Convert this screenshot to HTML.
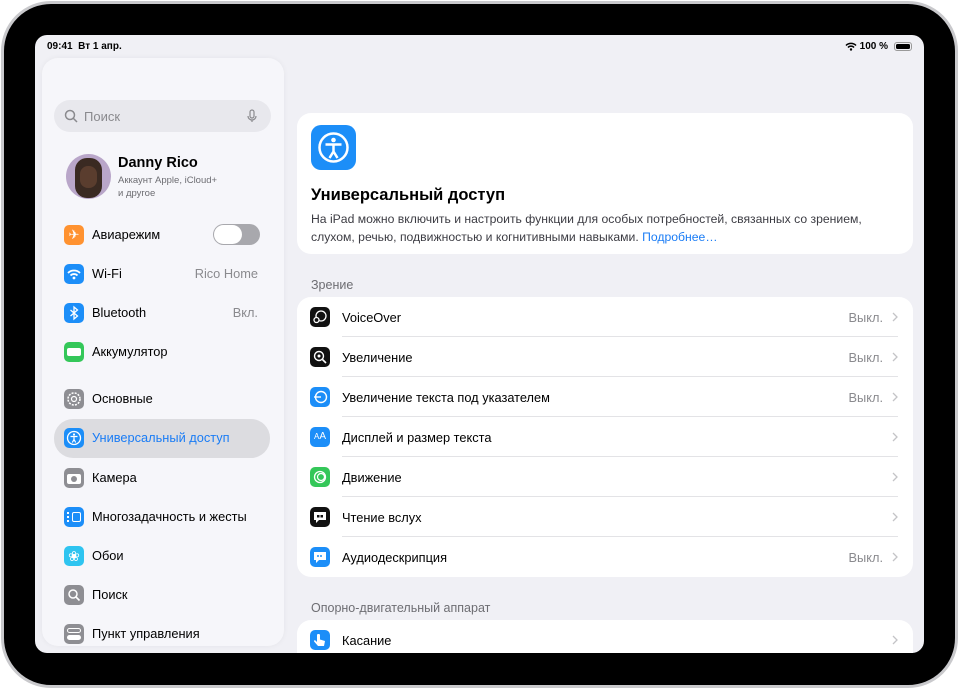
<!DOCTYPE html>
<html><head><meta charset="utf-8"><style>
*{margin:0;padding:0;box-sizing:border-box}
body{width:960px;height:692px;background:#fff;font-family:"Liberation Sans",sans-serif;position:relative;overflow:hidden}
.frame{position:absolute;left:1px;top:1px;width:957px;height:687px;border-radius:50px;background:#000;border:3px solid #c9c9cc}
.screen{position:absolute;left:35px;top:35px;width:889px;height:618px;border-radius:12px;background:#f0f0f5;overflow:hidden}
.abs{position:absolute}
.side{position:absolute;left:7px;top:23px;width:242px;height:588px;background:#f6f6fa;border-radius:16px;box-shadow:0 0 6px rgba(0,0,0,.05)}
.row{position:absolute;left:12px;height:38px;width:216px;font-size:12.8px;color:#000}
.row .ic{position:absolute;left:10px;top:9px;width:20px;height:20px;border-radius:5px}
.row .t{position:absolute;left:38px;top:11px}
.row .v{position:absolute;right:12px;top:11px;color:#8a8a8e}
.card{position:absolute;background:#fff;border-radius:14px}
.li{position:absolute;left:0;width:616px;height:40px;font-size:12.8px}
.li .ic{position:absolute;left:13px;top:10px;width:20px;height:20px;border-radius:5px}
.li .t{position:absolute;left:45px;top:13px}
.li .v{position:absolute;right:30px;top:13px;color:#8a8a8e}
.li .ch{position:absolute;right:15px;top:15px;width:6px;height:10px}
.li .sep{position:absolute;left:45px;right:15px;bottom:0;height:1px;background:#e3e3e6}
.hdr{position:absolute;left:16px;font-size:12.5px;color:#6d6d72}
</style></head><body>
<svg width="0" height="0" style="position:absolute"><defs><symbol id="chv" viewBox="0 0 6 10"><path d="M1 1l4 4-4 4" stroke="#c4c4c7" stroke-width="1.3" fill="none"/></symbol></defs></svg>
<div class="frame"></div>
<div class="screen">
 <div class="abs" style="left:12px;top:6px;font-size:10px;font-weight:bold">09:41&nbsp;&nbsp;Вт 1 апр.</div>
 <div class="abs" style="right:12px;top:6px;font-size:10px;font-weight:bold;display:flex;align-items:center;gap:3px">
  <svg width="12" height="9" viewBox="0 0 12 9"><path d="M1 3.5a7 7 0 0 1 10 0M3 5.5a4 4 0 0 1 6 0" stroke="#000" stroke-width="1.5" fill="none"/><circle cx="6" cy="7.5" r="1.2"/></svg>
  100 %<span style="display:inline-block;width:18px;height:9px;border:1px solid #999;border-radius:3px;margin-left:3px;padding:1px"><span style="display:block;width:100%;height:100%;background:#000;border-radius:1.5px"></span></span></div>
 <div class="side">
  <div class="abs" style="left:12px;top:42px;width:217px;height:32px;border-radius:16px;background:#e8e8ed"></div>
  <svg class="abs" style="left:22px;top:51px" width="14" height="14" viewBox="0 0 14 14"><circle cx="6" cy="6" r="4.5" stroke="#8a8a8e" stroke-width="1.5" fill="none"/><path d="M9.5 9.5l3.5 3.5" stroke="#8a8a8e" stroke-width="1.5"/></svg>
  <div class="abs" style="left:42px;top:51px;font-size:13px;color:#8a8a8e">Поиск</div>
  <svg class="abs" style="left:205px;top:51px" width="10" height="14" viewBox="0 0 10 14"><rect x="3" y="1" width="4" height="8" rx="2" fill="none" stroke="#8a8a8e" stroke-width="1.2"/><path d="M1 7a4 4 0 0 0 8 0M5 11v2" stroke="#8a8a8e" stroke-width="1.2" fill="none"/></svg>
  <div class="abs" style="left:24px;top:96px;width:45px;height:45px;border-radius:50%;background:#b9a6c9;overflow:hidden"><div style="position:absolute;left:9px;top:4px;width:27px;height:40px;border-radius:12px;background:#3a2a22"></div><div style="position:absolute;left:14px;top:12px;width:17px;height:22px;border-radius:8px;background:#5a3d2e"></div></div>
  <div class="abs" style="left:76px;top:97px;font-size:14.5px;font-weight:bold">Danny Rico</div>
  <div class="abs" style="left:76px;top:116px;font-size:9.5px;color:#6d6d72;line-height:13px">Аккаунт Apple, iCloud+<br>и другое</div>
  <div class="row" style="top:158px"><div class="ic" style="background:#ff9230;color:#fff;font-size:13px;text-align:center;line-height:20px">✈</div><div class="t">Авиарежим</div>
   <div class="abs" style="right:10px;top:8px;width:47px;height:21px;border-radius:11px;background:#a8a8ad"><div style="position:absolute;left:1px;top:1px;width:28px;height:19px;border-radius:10px;background:#fff"></div></div></div>
  <div class="row" style="top:197px"><div class="ic" style="background:#1c8ef8"><svg width="20" height="20" viewBox="0 0 20 20"><path d="M4 9a8.5 8.5 0 0 1 12 0M6.5 11.5a5 5 0 0 1 7 0" stroke="#fff" stroke-width="1.8" fill="none"/><circle cx="10" cy="14" r="1.4" fill="#fff"/></svg></div><div class="t">Wi-Fi</div><div class="v">Rico Home</div></div>
  <div class="row" style="top:236px"><div class="ic" style="background:#1c8ef8"><svg width="20" height="20" viewBox="0 0 20 20"><path d="M6.5 7l7 6-3.5 3V4l3.5 3-7 6" stroke="#fff" stroke-width="1.3" fill="none"/></svg></div><div class="t">Bluetooth</div><div class="v">Вкл.</div></div>
  <div class="row" style="top:275px"><div class="ic" style="background:#34c759"><div style="position:absolute;left:3px;top:6px;width:14px;height:8px;border-radius:2px;background:#fff"></div></div><div class="t">Аккумулятор</div></div>
  <div class="row" style="top:322px"><div class="ic" style="background:#8e8e93"><svg width="20" height="20" viewBox="0 0 20 20"><circle cx="10" cy="10" r="6" stroke="#fff" stroke-width="1.5" fill="none" stroke-dasharray="2 1.2"/><circle cx="10" cy="10" r="2.5" stroke="#fff" stroke-width="1.2" fill="none"/></svg></div><div class="t">Основные</div></div>
  <div class="row" style="top:361px;background:#dcdce0;border-radius:19px;height:39px"><div class="ic" style="background:#1c8ef8;border-radius:5px"><svg width="20" height="20" viewBox="0 0 20 20"><circle cx="10" cy="10" r="6.5" stroke="#fff" stroke-width="1.3" fill="none"/><circle cx="10" cy="6.5" r="1.1" fill="#fff"/><path d="M6.5 8.5h7M10 8.5v3M8.3 14.5l1.7-3 1.7 3" stroke="#fff" stroke-width="1.2" fill="none"/></svg></div><div class="t" style="color:#1a7cf5">Универсальный доступ</div></div>
  <div class="row" style="top:401px"><div class="ic" style="background:#8e8e93"><div style="position:absolute;left:3px;top:6px;width:14px;height:10px;border-radius:2px;background:#fff"></div><div style="position:absolute;left:7px;top:8px;width:6px;height:6px;border-radius:50%;background:#8e8e93"></div></div><div class="t">Камера</div></div>
  <div class="row" style="top:440px"><div class="ic" style="background:#1c8ef8"><div style="position:absolute;left:8px;top:5px;width:9px;height:10px;border:1.5px solid #fff;border-radius:2px"></div><div style="position:absolute;left:3px;top:5px;width:2px;height:10px;border-left:2px dotted #fff"></div></div><div class="t">Многозадачность и жесты</div></div>
  <div class="row" style="top:479px"><div class="ic" style="background:#2ec4f0;color:#fff;text-align:center;line-height:20px;font-size:14px">❀</div><div class="t">Обои</div></div>
  <div class="row" style="top:518px"><div class="ic" style="background:#8e8e93"><svg width="20" height="20" viewBox="0 0 20 20"><circle cx="9" cy="9" r="4" stroke="#fff" stroke-width="1.5" fill="none"/><path d="M12 12l3.5 3.5" stroke="#fff" stroke-width="1.6"/></svg></div><div class="t">Поиск</div></div>
  <div class="row" style="top:557px"><div class="ic" style="background:#8e8e93"><div style="position:absolute;left:3px;top:4px;width:14px;height:5px;border-radius:3px;border:1.3px solid #fff"></div><div style="position:absolute;left:3px;top:11px;width:14px;height:5px;border-radius:3px;background:#fff"></div></div><div class="t">Пункт управления</div></div>
 </div>
 <div class="card" style="left:262px;top:78px;width:616px;height:141px">
  <div class="abs" style="left:14px;top:12px;width:45px;height:45px;border-radius:10px;background:#1c8ef8"><svg width="45" height="45" viewBox="0 0 45 45"><circle cx="22.5" cy="22.5" r="14" stroke="#fff" stroke-width="2.5" fill="none"/><circle cx="22.5" cy="15" r="2.3" fill="#fff"/><path d="M14.5 19.5h16M22.5 19.5v7M18.5 33l4-6.5 4 6.5" stroke="#fff" stroke-width="2.5" fill="none" stroke-linejoin="round"/></svg></div>
  <div class="abs" style="left:14px;top:73px;font-size:16.5px;font-weight:bold">Универсальный доступ</div>
  <div class="abs" style="left:14px;top:97px;font-size:12.2px;color:#3c3c43;line-height:18px;width:588px">На iPad можно включить и настроить функции для особых потребностей, связанных со зрением, слухом, речью, подвижностью и когнитивными навыками. <span style="color:#1a7cf5">Подробнее…</span></div>
 </div>
 <div class="hdr" style="left:276px;top:243px">Зрение</div>
 <div class="card" style="left:262px;top:262px;width:616px;height:280px">
  <div class="li" style="top:0"><div class="ic" style="background:#111"><svg width="20" height="20" viewBox="0 0 20 20"><circle cx="11" cy="9" r="5" stroke="#fff" stroke-width="1.3" fill="none"/><circle cx="6.5" cy="13" r="2.5" stroke="#fff" stroke-width="1.3" fill="#111"/></svg></div><div class="t">VoiceOver</div><div class="v">Выкл.</div><svg class="ch"><use href="#chv"/></svg><div class="sep"></div></div>
  <div class="li" style="top:40px"><div class="ic" style="background:#111"><svg width="20" height="20" viewBox="0 0 20 20"><circle cx="9" cy="9" r="4.5" stroke="#fff" stroke-width="1.4" fill="none"/><circle cx="9" cy="9" r="1.5" fill="#fff"/><path d="M12.5 12.5l3.5 3.5" stroke="#fff" stroke-width="1.6"/></svg></div><div class="t">Увеличение</div><div class="v">Выкл.</div><svg class="ch"><use href="#chv"/></svg><div class="sep"></div></div>
  <div class="li" style="top:80px"><div class="ic" style="background:#1c8ef8"><svg width="20" height="20" viewBox="0 0 20 20"><circle cx="11" cy="10" r="5.5" stroke="#fff" stroke-width="1.4" fill="none"/><path d="M4 10h7" stroke="#fff" stroke-width="1.4"/></svg></div><div class="t">Увеличение текста под указателем</div><div class="v">Выкл.</div><svg class="ch"><use href="#chv"/></svg><div class="sep"></div></div>
  <div class="li" style="top:120px"><div class="ic" style="background:#1c8ef8;color:#fff;font-size:10px;text-align:center;line-height:20px"><span style="font-size:8px">A</span>A</div><div class="t">Дисплей и размер текста</div><svg class="ch"><use href="#chv"/></svg><div class="sep"></div></div>
  <div class="li" style="top:160px"><div class="ic" style="background:#34c759"><svg width="20" height="20" viewBox="0 0 20 20"><circle cx="10" cy="10" r="5.5" stroke="#fff" stroke-width="1.3" fill="none"/><circle cx="11" cy="10" r="3.5" stroke="#fff" stroke-width="1.2" fill="none"/></svg></div><div class="t">Движение</div><svg class="ch"><use href="#chv"/></svg><div class="sep"></div></div>
  <div class="li" style="top:200px"><div class="ic" style="background:#111"><svg width="20" height="20" viewBox="0 0 20 20"><path d="M4 5h12v8h-7l-3 3v-3H4z" fill="#fff"/><rect x="7" y="8" width="2.5" height="2.5" fill="#111"/><rect x="10.5" y="8" width="2.5" height="2.5" fill="#111"/></svg></div><div class="t">Чтение вслух</div><svg class="ch"><use href="#chv"/></svg><div class="sep"></div></div>
  <div class="li" style="top:240px"><div class="ic" style="background:#1c8ef8"><svg width="20" height="20" viewBox="0 0 20 20"><path d="M4 5h12v8h-7l-3 3v-3H4z" fill="#fff"/><path d="M8 8v2M11 8v2" stroke="#1c8ef8" stroke-width="1.5"/></svg></div><div class="t">Аудиодескрипция</div><div class="v">Выкл.</div><svg class="ch"><use href="#chv"/></svg></div>
 </div>
 <div class="hdr" style="left:276px;top:566px">Опорно-двигательный аппарат</div>
 <div class="card" style="left:262px;top:585px;width:616px;height:60px">
  <div class="li" style="top:0"><div class="ic" style="background:#1c8ef8"><svg width="20" height="20" viewBox="0 0 20 20"><path d="M7 5v7l-1.5-1.5c-1-.8-2 .2-1.3 1.1L8 16h6l1-5-5-1.5V5c0-1.3-3-1.3-3 0z" fill="#fff"/></svg></div><div class="t">Касание</div><svg class="ch"><use href="#chv"/></svg></div>
 </div>
</div>
</body></html>
